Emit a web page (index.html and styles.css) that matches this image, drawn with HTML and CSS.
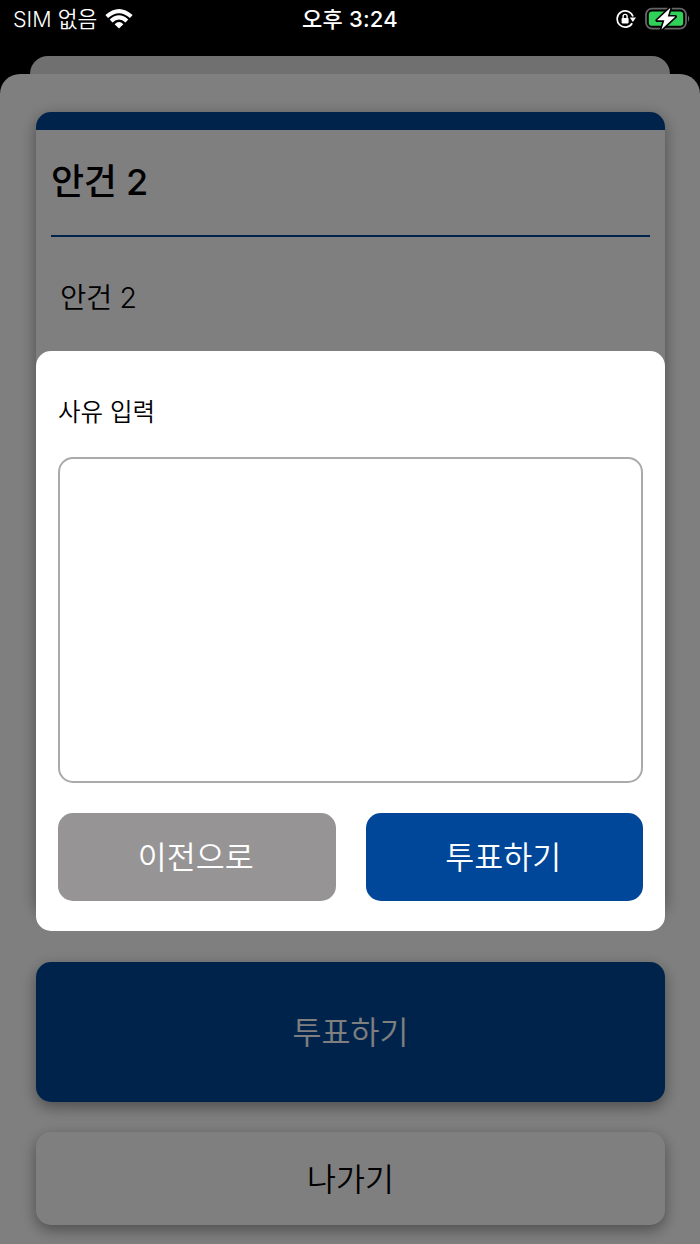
FILE: index.html
```html
<!DOCTYPE html>
<html lang="ko">
<head>
    <meta charset="UTF-8">
    <title>안건 투표</title>
    <link rel="stylesheet" href="styles.css">
</head>
<body>

    <div class="screen">
        <div class="statusbar">
            <div class="status-left">
                <span class="carrier">SIM 없음</span>
                <svg class="wifi" width="28" height="20" viewBox="0 0 28 20" fill="none" stroke="#fff" stroke-width="4">
                    <path d="M1.7 7.6 Q14 -3.4 26.3 7.6"/>
                    <path d="M6.1 12 Q14 4.8 21.9 12"/>
                    <path d="M14 19.6 L9.6 15.2 Q14 11 18.4 15.2 Z" fill="#fff" stroke="none"/>
                </svg>
            </div>
            <span class="clock">오후 3:24</span>
            <div class="status-right">
                <svg width="20" height="20" viewBox="0 0 20 20">
                    <path d="M17 7.6 A8.1 8.1 0 1 0 16.2 14.2" fill="none" stroke="#fff" stroke-width="1.7"/>
                    <path d="M13.8 8.6 H20 L16.9 13 Z" fill="#fff"/>
                    <rect x="5.6" y="9" width="7" height="5.4" rx="0.8" fill="#fff"/>
                    <path d="M7.1 9.4 V7.4 A2 2 0 0 1 11.1 7.4 V9.4" fill="none" stroke="#fff" stroke-width="1.4"/>
                </svg>
                <svg width="46" height="24" viewBox="0 0 46 24">
                    <rect x="1" y="1.6" width="40" height="20" rx="6" fill="none" stroke="#666" stroke-width="1.8"/>
                    <rect x="3.8" y="4.4" width="34.4" height="14.4" rx="3.4" fill="#30d158"/>
                    <path d="M43 8.3 Q45.6 11.6 43 15 Z" fill="#666"/>
                    <path d="M25.4 0.8 L12 13.3 H19.4 L16.4 22.6 L30.4 9.6 H22.8 Z" fill="#fff" stroke="#000" stroke-width="3.2" stroke-linejoin="round" paint-order="stroke"/>
                </svg>
            </div>
        </div>

        <div class="sheet-back"></div>
        <div class="sheet">
            <div class="card">
                <h2 class="card-title">안건 2</h2>
                <p class="card-text">안건 2</p>
            </div>
            <button class="btn btn-vote">투표하기</button>
            <button class="btn btn-exit">나가기</button>
        </div>

        <div class="overlay">
            <div class="modal">
                <label class="modal-label" for="reason">사유 입력</label>
                <textarea id="reason" class="reason"></textarea>
                <div class="modal-buttons">
                    <button class="modal-btn gray">이전으로</button>
                    <button class="modal-btn blue">투표하기</button>
                </div>
            </div>
        </div>
    </div>

</body>
</html>
```

FILE: styles.css
```css
* {
    margin: 0;
    padding: 0;
    box-sizing: border-box;
    font-family: Inter, 'Noto Sans CJK KR', sans-serif;
}

body {
    background-color: #000;
}

.screen {
    position: relative;
    width: 700px;
    height: 1244px;
    overflow: hidden;
    display: flex;
    flex-direction: column;
}

.statusbar {
    position: relative;
    z-index: 2;
    height: 56px;
    padding: 0 9px 20px 13px;
    display: grid;
    grid-template-columns: 1fr auto 1fr;
    align-items: center;
    color: #fff;
    font-size: 21px;
    line-height: 36px;
}

.status-left,
.status-right {
    display: flex;
    align-items: center;
}

.status-left {
    gap: 8px;
}

.carrier {
    padding-top: 1px;
    font-size: 21.5px;
    font-weight: 350;
}

.status-right {
    justify-content: flex-end;
    gap: 9px;
}

.clock {
    padding: 1px 4px 0 0;
    font-size: 22px;
    font-weight: 500;
    letter-spacing: 0.2px;
}

.sheet-back {
    height: 18px;
    margin: 0 30px;
    border-radius: 18px 18px 0 0;
    background-color: #e0e0e0;
}

.sheet {
    flex: 1;
    padding: 38px 35px 0 36px;
    border-radius: 20px 20px 0 0;
    background-color: #fff;
    display: flex;
    flex-direction: column;
}

.card {
    height: 800px;
    padding: 0 15px;
    border-top: 18px solid #004799;
    border-radius: 15px;
    background-color: #fff;
    box-shadow: 0 4px 16px rgba(0,0,0,0.4);
}

.card-title {
    height: 107px;
    border-bottom: 2px solid #004799;
    font-size: 36px;
    font-weight: 500;
    line-height: 105px;
    letter-spacing: -0.3px;
}

.card-text {
    padding: 39px 9px 0;
    font-size: 28.5px;
    font-weight: 350;
    line-height: 44px;
    letter-spacing: -0.3px;
}

.btn {
    flex-shrink: 0;
    border: none;
    border-radius: 15px;
    font-size: 31.5px;
    font-weight: 350;
    box-shadow: 0 5px 15px rgba(0,0,0,0.4);
}

.btn-vote {
    height: 140px;
    margin-top: 50px;
    padding-bottom: 5px;
    background-color: #004799;
    color: #fff;
}

.btn-exit {
    height: 93px;
    margin-top: 30px;
    padding-bottom: 4px;
    background-color: #fff;
    color: #000;
}

/* dim layer with the reason dialog */
.overlay {
    position: absolute;
    top: 0;
    left: 0;
    right: 0;
    bottom: 0;
    padding: 351px 35px 0 36px;
    background-color: rgba(0,0,0,0.5);
}

.modal {
    height: 580px;
    padding: 41px 22px 30px;
    border-radius: 15px;
    background-color: #fff;
    display: flex;
    flex-direction: column;
}

.modal-label {
    height: 65px;
    font-size: 24.5px;
    font-weight: 350;
    line-height: 40px;
}

.reason {
    height: 326px;
    padding: 12px;
    border: 2px solid #aaa;
    border-radius: 15px;
    resize: none;
    outline: none;
    font-size: 24px;
}

.modal-buttons {
    display: flex;
    gap: 30px;
    margin-top: 30px;
}

.modal-btn {
    flex: 1;
    height: 88px;
    padding: 0 2px 5px 0;
    border: none;
    border-radius: 15px;
    color: #fff;
    font-size: 31.5px;
    font-weight: 350;
}

.gray {
    background-color: #969495;
}

.blue {
    background-color: #004799;
}
```
